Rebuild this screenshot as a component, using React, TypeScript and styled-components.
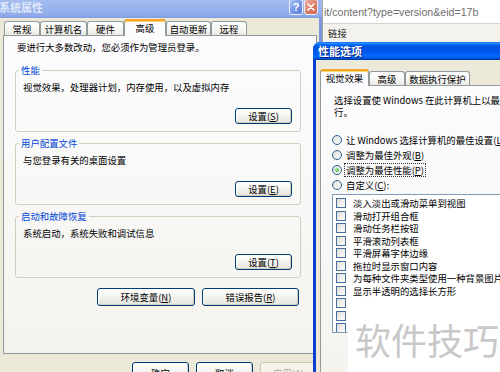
import React from "react";
import styled, { createGlobalStyle, css } from "styled-components";

const FONT = `"Noto Sans CJK SC", "Noto Sans CJK JP", "Noto Sans", sans-serif`;
const XP_BG = "#ece9d8";
const ACTIVE_TITLE =
  "linear-gradient(to bottom, #0058ee 0%, #3593ff 5%, #288eff 8%, #127dff 11%, #036ffc 14%, #0262ee 18%, #0057e5 24%, #0054e3 30%, #0055eb 56%, #005bf5 66%, #026afe 76%, #0062ef 86%, #0052d6 92%, #0040ab 96%, #003092 100%)";
const INACTIVE_TITLE =
  "linear-gradient(to bottom, #9db8ee 0%, #c3d4f7 6%, #b5caf4 12%, #a6bdf1 22%, #9cb6ee 45%, #97b1ec 70%, #8ea9e8 90%, #7f9be0 100%)";

const Global = createGlobalStyle`
  html, body { margin: 0; padding: 0; background: #fff; }
  body { font-family: ${FONT}; }
  * { box-sizing: border-box; }
`;

const Desktop = styled.div`
  position: relative;
  width: 500px;
  height: 372px;
  overflow: hidden;
  background: #fff;
  font-family: ${FONT};
  font-size: 9.4px;
  line-height: 12px;
  color: #000;
`;

/* ---------- background browser ---------- */
const Browser = styled.div`
  position: absolute;
  left: 322px;
  top: 0;
  width: 178px;
  height: 42px;
  display: flex;
  flex-direction: column;
  border-left: 1px solid #a7a6a0;
  background: #f3f2ec;
`;

const AddressBar = styled.div`
  height: 24px;
  display: flex;
  align-items: center;
  padding-left: 1px;
  background: #fff;
  border-bottom: 1px solid #d6d3c6;
  font-family: "Liberation Sans", Arial, sans-serif;
  font-size: 10.6px;
  color: #6e6e6e;
  white-space: nowrap;
  overflow: hidden;
`;

const LinksBar = styled.div`
  flex: 1;
  display: flex;
  align-items: center;
  padding-left: 5px;
  color: #222;
`;

/* ---------- windows ---------- */
const Window = styled.section<{ $active?: boolean }>`
  position: absolute;
  display: flex;
  flex-direction: column;
  padding: 0 3px 3px;
  border-radius: 7px 7px 0 0;
  background: ${(p) => (p.$active ? "#0b3fd2" : "#7b96df")};
`;

const SysPropsWindow = styled(Window)`
  left: -7px;
  top: -5px;
  width: 329px;
  height: 389px;
`;

const PerfWindow = styled(Window)`
  left: 313px;
  top: 42px;
  width: 200px;
  height: 340px;
`;

const TitleBar = styled.header<{ $active?: boolean; $h: number }>`
  display: flex;
  align-items: center;
  flex-shrink: 0;
  height: ${(p) => p.$h}px;
  margin: 0 -3px;
  padding: 0 4px 0 ${(p) => (p.$active ? 5 : 6)}px;
  border-radius: 7px 7px 0 0;
  background: ${(p) => (p.$active ? ACTIVE_TITLE : INACTIVE_TITLE)};
`;

const TitleText = styled.span<{ $active?: boolean }>`
  flex: 1;
  font-size: 11px;
  font-weight: 700;
  line-height: 14px;
  white-space: nowrap;
  color: ${(p) => (p.$active ? "#fff" : "#dfe8fa")};
  text-shadow: ${(p) => (p.$active ? "1px 1px 0 #0a1f80" : "none")};
`;

const CaptionButton = styled.span<{ $kind: "help" | "close" }>`
  width: 14px;
  height: 16px;
  margin-left: 1px;
  display: flex;
  align-items: center;
  justify-content: center;
  border: 1px solid #e8eefc;
  border-radius: 3px;
  color: #fff;
  font-family: "Liberation Sans", Arial, sans-serif;
  font-weight: 700;
  font-size: 11px;
  background: ${(p) =>
    p.$kind === "help"
      ? "linear-gradient(135deg, #a9c1f4, #6f92e6 60%, #5c80dc)"
      : "linear-gradient(135deg, #f0b3a6, #dc7c68 55%, #cf6552)"};
`;

const WindowBody = styled.div<{ $pad: string }>`
  flex: 1;
  display: flex;
  flex-direction: column;
  min-height: 0;
  background: ${XP_BG};
  padding: ${(p) => p.$pad};
`;

/* ---------- tabs ---------- */
const TabStrip = styled.div<{ $indent: number }>`
  position: relative;
  z-index: 1;
  display: flex;
  align-items: flex-end;
  flex-shrink: 0;
  height: 17px;
  margin-bottom: -1px;
  padding-left: ${(p) => p.$indent}px;
`;

const Tab = styled.div<{ $w: number; $selected?: boolean }>`
  width: ${(p) => p.$w}px;
  height: ${(p) => (p.$selected ? 17 : 14)}px;
  margin-bottom: ${(p) => (p.$selected ? 0 : 1)}px;
  display: flex;
  align-items: center;
  justify-content: center;
  white-space: nowrap;
  border: 1px solid #919b9c;
  border-bottom: none;
  border-radius: 3px 3px 0 0;
  background: linear-gradient(#fefefe, #f7f7f4 55%, #e9e8e1);
  ${(p) =>
    p.$selected &&
    css`
      border-top: 2px solid #f0a42c;
      box-shadow: inset 0 1px 0 #ffd364;
      background: #fcfcfe;
      padding-bottom: 1px;
    `}
`;

const TabPanel = styled.div`
  display: flex;
  flex-direction: column;
  flex-shrink: 0;
  border: 1px solid #919b9c;
  background: linear-gradient(#fcfcfe, #f4f3ee);
`;

const SysPanel = styled(TabPanel)`
  height: 319px;
  padding: 5px 15px 0 11px;
`;

const PerfPanel = styled(TabPanel)`
  flex: 1;
  padding: 8px 0 0 11px;
  overflow: hidden;
`;

const Note = styled.p`
  margin: 0 0 6px 2px;
  white-space: nowrap;
`;

/* ---------- group boxes ---------- */
const Group = styled.fieldset`
  margin: 5px 0 0;
  padding: 0 8px 7px 7px;
  min-width: 0;
  border: 1px solid #d0d0bf;
  border-radius: 3px;
  display: flex;
  flex-direction: column;
`;

const Legend = styled.legend`
  margin-left: -4px;
  padding: 0 2px;
  color: #0046d5;
  line-height: 12px;
`;

const GroupText = styled.div`
  margin-top: 5px;
  white-space: nowrap;
`;

const ButtonRow = styled.div<{ $mt: number; $gap?: number; $pr?: number }>`
  display: flex;
  justify-content: flex-end;
  gap: ${(p) => p.$gap ?? 7}px;
  margin-top: ${(p) => p.$mt}px;
  padding-right: ${(p) => p.$pr ?? 0}px;
  flex-shrink: 0;
`;

const XPButton = styled.button<{ $w: number; $h: number; $disabled?: boolean }>`
  width: ${(p) => p.$w}px;
  height: ${(p) => p.$h}px;
  flex-shrink: 0;
  padding: 0;
  display: flex;
  align-items: center;
  justify-content: center;
  font: inherit;
  white-space: nowrap;
  color: #000;
  border: 1px solid #003c74;
  border-radius: 3px;
  background: linear-gradient(#ffffff, #f4f4f0 45%, #e5e4dc);
  box-shadow: inset -1px -1px 0 #d5cfc1, inset 1px 1px 0 #ffffff;
  ${(p) =>
    p.$disabled &&
    css`
      color: #aca899;
      border-color: #c9c7ba;
      background: #f5f4ea;
      box-shadow: none;
    `}
`;

/* ---------- performance options ---------- */
const RadioList = styled.div`
  display: flex;
  flex-direction: column;
  margin-top: 8px;
`;

const RadioRow = styled.div`
  height: 15px;
  display: flex;
  align-items: center;
  gap: 3px;
  white-space: nowrap;
`;

const RadioDot = styled.span<{ $checked?: boolean }>`
  width: 10px;
  height: 10px;
  flex-shrink: 0;
  display: flex;
  align-items: center;
  justify-content: center;
  border: 1px solid #2c5f8f;
  border-radius: 50%;
  background: linear-gradient(135deg, #dcdcd7, #ffffff);
  &::after {
    content: "";
    width: 4px;
    height: 4px;
    border-radius: 50%;
    background: ${(p) =>
      p.$checked ? "radial-gradient(circle at 35% 35%, #9cef94, #22a322)" : "transparent"};
  }
`;

const FocusLabel = styled.span<{ $focus?: boolean }>`
  padding: 0 1px;
  outline: ${(p) => (p.$focus ? "1px dotted #333" : "none")};
`;

const CheckList = styled.div`
  height: 139px;
  margin-top: 2px;
  padding: 2px 0 0 3px;
  border: 1px solid #7f9db9;
  border-right: none;
  background: #fff;
  overflow: hidden;
`;

const CheckRow = styled.div`
  height: 12.5px;
  display: flex;
  align-items: center;
  gap: 7px;
  white-space: nowrap;
`;

const CheckBox = styled.span`
  width: 10px;
  height: 10px;
  flex-shrink: 0;
  border: 1px solid #45709c;
  background: linear-gradient(135deg, #dcdcd7, #ffffff);
`;

/* ---------- watermark ---------- */
const Watermark = styled.div`
  position: absolute;
  left: 348px;
  top: 299px;
  right: 0;
  bottom: 0;
  padding: 22px 0 0 7px;
  background: #fff;
  box-shadow: 0 -1px 2px #fff;
  font-size: 36px;
  line-height: 36px;
  color: #c8c8c8;
  white-space: nowrap;
`;

const sysTabs = [
  { label: "常规", w: 36 },
  { label: "计算机名", w: 47 },
  { label: "硬件", w: 37 },
  { label: "高级", w: 42, selected: true },
  { label: "自动更新", w: 45 },
  { label: "远程", w: 36 },
];

const perfTabs = [
  { label: "视觉效果", w: 49, selected: true },
  { label: "高级", w: 36 },
  { label: "数据执行保护", w: 65 },
];

const groups = [
  { title: "性能", text: "视觉效果，处理器计划，内存使用，以及虚拟内存", key: "S" },
  { title: "用户配置文件", text: "与您登录有关的桌面设置", key: "E" },
  { title: "启动和故障恢复", text: "系统启动，系统失败和调试信息", key: "T" },
];

const radios = [
  { pre: "让 Windows 选择计算机的最佳设置", key: "L", post: ")" },
  { pre: "调整为最佳外观", key: "B", post: ")" },
  { pre: "调整为最佳性能", key: "P", post: ")", checked: true },
  { pre: "自定义", key: "C", post: "):" },
];

const effects = [
  "淡入淡出或滑动菜单到视图",
  "滑动打开组合框",
  "滑动任务栏按钮",
  "平滑滚动列表框",
  "平滑屏幕字体边缘",
  "拖拉时显示窗口内容",
  "为每种文件夹类型使用一种背景图片",
  "显示半透明的选择长方形",
  "在菜单下显示阴影",
  "在鼠标指针下显示阴影",
  "在桌面上为图标标签使用阴影",
];

export default function App() {
  return (
    <Desktop>
      <Global />

      <Browser>
        <AddressBar>it/content?type=version&amp;eid=17b</AddressBar>
        <LinksBar>链接</LinksBar>
      </Browser>

      <SysPropsWindow>
        <TitleBar $h={23}>
          <TitleText>系统属性</TitleText>
          <CaptionButton $kind="help">?</CaptionButton>
          <CaptionButton $kind="close">
            <svg width="8" height="8" viewBox="0 0 8 8">
              <path d="M1 1 L7 7 M7 1 L1 7" stroke="#fff" strokeWidth="1.6" strokeLinecap="round" />
            </svg>
          </CaptionButton>
        </TitleBar>
        <WindowBody $pad="1px 2px 0 7px">
          <TabStrip $indent={1}>
            {sysTabs.map((t) => (
              <Tab key={t.label} $w={t.w} $selected={t.selected}>
                {t.label}
              </Tab>
            ))}
          </TabStrip>
          <SysPanel>
            <Note>要进行大多数改动，您必须作为管理员登录。</Note>
            {groups.map((g) => (
              <Group key={g.title}>
                <Legend>{g.title}</Legend>
                <GroupText>{g.text}</GroupText>
                <ButtonRow $mt={15}>
                  <XPButton $w={57} $h={16}>
                    设置(<u>{g.key}</u>)
                  </XPButton>
                </ButtonRow>
              </Group>
            ))}
            <ButtonRow $mt={10} $pr={2}>
              <XPButton $w={98} $h={18}>
                环境变量(<u>N</u>)
              </XPButton>
              <XPButton $w={97} $h={18}>
                错误报告(<u>R</u>)
              </XPButton>
            </ButtonRow>
          </SysPanel>
          <ButtonRow $mt={8}>
            <XPButton $w={57} $h={21}>确定</XPButton>
            <XPButton $w={57} $h={21}>取消</XPButton>
            <XPButton $w={57} $h={21} $disabled>
              应用(<u>A</u>)
            </XPButton>
          </ButtonRow>
        </WindowBody>
      </SysPropsWindow>

      <PerfWindow $active>
        <TitleBar $active $h={18}>
          <TitleText $active>性能选项</TitleText>
        </TitleBar>
        <WindowBody $pad="9px 0 0 4px">
          <TabStrip $indent={0}>
            {perfTabs.map((t) => (
              <Tab key={t.label} $w={t.w} $selected={t.selected}>
                {t.label}
              </Tab>
            ))}
          </TabStrip>
          <PerfPanel>
            <Note as="div">
              选择设置使 Windows 在此计算机上以最佳外观和性能运
              <br />
              行。
            </Note>
            <RadioList>
              {radios.map((r) => (
                <RadioRow key={r.key}>
                  <RadioDot $checked={r.checked} />
                  <FocusLabel $focus={r.checked}>
                    {r.pre}(<u>{r.key}</u>
                    {r.post}
                  </FocusLabel>
                </RadioRow>
              ))}
            </RadioList>
            <CheckList>
              {effects.map((e) => (
                <CheckRow key={e}>
                  <CheckBox />
                  {e}
                </CheckRow>
              ))}
            </CheckList>
          </PerfPanel>
        </WindowBody>
      </PerfWindow>

      <Watermark>软件技巧</Watermark>
    </Desktop>
  );
}
